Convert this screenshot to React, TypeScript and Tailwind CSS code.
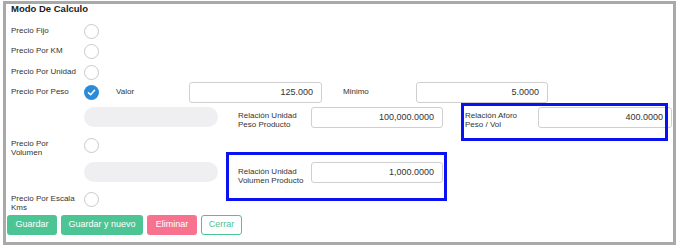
const font = { fontFamily: '"Liberation Sans", Arial, sans-serif' }

const Radio = ({ checked = false, className = '' }: { checked?: boolean; className?: string }) =>
  checked ? (
    <div className={`flex h-[15px] w-[15px] shrink-0 items-center justify-center rounded-full bg-[#2a8bd9] ${className}`}>
      <svg width="9" height="9" viewBox="0 0 10 10" fill="none">
        <polyline points="1.6,5.2 4,7.5 8.4,2.6" stroke="white" strokeWidth="1.7" strokeLinecap="round" strokeLinejoin="round" />
      </svg>
    </div>
  ) : (
    <div className={`h-[15px] w-[15px] shrink-0 rounded-full border border-[#c9c9c9] bg-white ${className}`} />
  )

const NumInput = ({ value, w }: { value: string; w: string }) => (
  <div
    className={`flex h-[21px] ${w} shrink-0 items-center justify-end rounded-[3px] border border-[#cfcfcf] bg-white pr-[8px] text-[9px] text-[#333]`}
  >
    {value}
  </div>
)

const Label = ({ children, w = 'w-[73px]', pt = 'pt-[5px]' }: { children: React.ReactNode; w?: string; pt?: string }) => (
  <div className={`${w} ${pt} shrink-0 text-[8px] leading-[9px] text-[#333]`}>{children}</div>
)

const Pill = () => <div className="h-[20px] w-[134px] shrink-0 rounded-full bg-[#efeff1]" />

const OptionRow = ({ label, checked, h }: { label: string; checked?: boolean; h: string }) => (
  <div className={`flex ${h} items-start pl-[5px]`}>
    <Label pt="pt-[2px]" w="w-[73px] pr-[5px]">
      {label}
    </Label>
    <Radio checked={checked} />
  </div>
)

export default function App() {
  return (
    <div className="h-[248px] w-[677px] bg-white pt-[1px] pl-[3px]" style={font}>
      <div className="relative h-[244px] w-[673px] border-[3px] border-[#a9a9a9] bg-white">
        <div className="h-[20px] pl-[5px] text-[9.5px] leading-[10px] font-bold text-[#222]">Modo De Calculo</div>

        <OptionRow label="Precio Fijo" h="h-[20px]" />
        <OptionRow label="Precio Por KM" h="h-[21px]" />
        <OptionRow label="Precio Por Unidad" h="h-[17px]" />

        <div className="flex h-[21px] items-start pl-[5px]">
          <Label pt="pt-[5px]" w="w-[73px] pr-[5px]">
            Precio Por Peso
          </Label>
          <Radio checked className="mt-[3px]" />
          <div className="w-[17px] shrink-0" />
          <Label>Valor</Label>
          <NumInput value="125.000" w="w-[133px]" />
          <div className="w-[21px] shrink-0" />
          <Label>Minimo</Label>
          <NumInput value="5.0000" w="w-[132px]" />
        </div>

        <div className="mt-[4px] flex h-[20px] items-start pl-[78px]">
          <Pill />
          <div className="w-[20px] shrink-0" />
          <Label pt="pt-[4px]">
            Relación Unidad
            <br />
            Peso Producto
          </Label>
          <NumInput value="100,000.0000" w="w-[132px]" />
          <div className="w-[22px] shrink-0" />
          <Label pt="pt-[4px]">
            Relación Aforo
            <br />
            Peso / Vol
          </Label>
          <NumInput value="400.0000" w="w-[134px]" />
        </div>

        <div className="mt-[11px] flex h-[20px] items-start pl-[5px]">
          <Label pt="pt-[1px]" w="w-[73px] pr-[5px]">
            Precio Por Volumen
          </Label>
          <Radio />
        </div>

        <div className="mt-[4px] flex h-[20px] items-start pl-[78px]">
          <Pill />
          <div className="w-[20px] shrink-0" />
          <Label pt="pt-[5px]">
            Relación Unidad
            <br />
            Volumen Producto
          </Label>
          <NumInput value="1,000.0000" w="w-[132px]" />
        </div>

        <div className="mt-[10px] flex h-[21px] items-start pl-[5px]">
          <Label pt="pt-[2px]" w="w-[73px] pr-[5px]">
            Precio Por Escala Kms
          </Label>
          <Radio />
        </div>

        <div className="mt-[2px] flex gap-[4px] pl-[1px] text-[9px]">
          <button className="h-[20px] w-[50px] rounded-[3px] bg-[#4cc493] text-white">Guardar</button>
          <button className="h-[20px] w-[82px] rounded-[3px] bg-[#4cc493] text-white">Guardar y nuevo</button>
          <button className="h-[20px] w-[50px] rounded-[3px] bg-[#f8728f] text-white">Eliminar</button>
          <button className="h-[20px] w-[41px] rounded-[3px] border border-[#4cc493] bg-white text-[#4cc493]">Cerrar</button>
        </div>

        <div className="pointer-events-none absolute top-[99px] left-[455px] h-[38px] w-[207px] border-[3px] border-[#0b12f2]" />
        <div className="pointer-events-none absolute top-[148px] left-[220px] h-[49px] w-[221px] border-[3px] border-[#0b12f2]" />
      </div>
    </div>
  )
}
